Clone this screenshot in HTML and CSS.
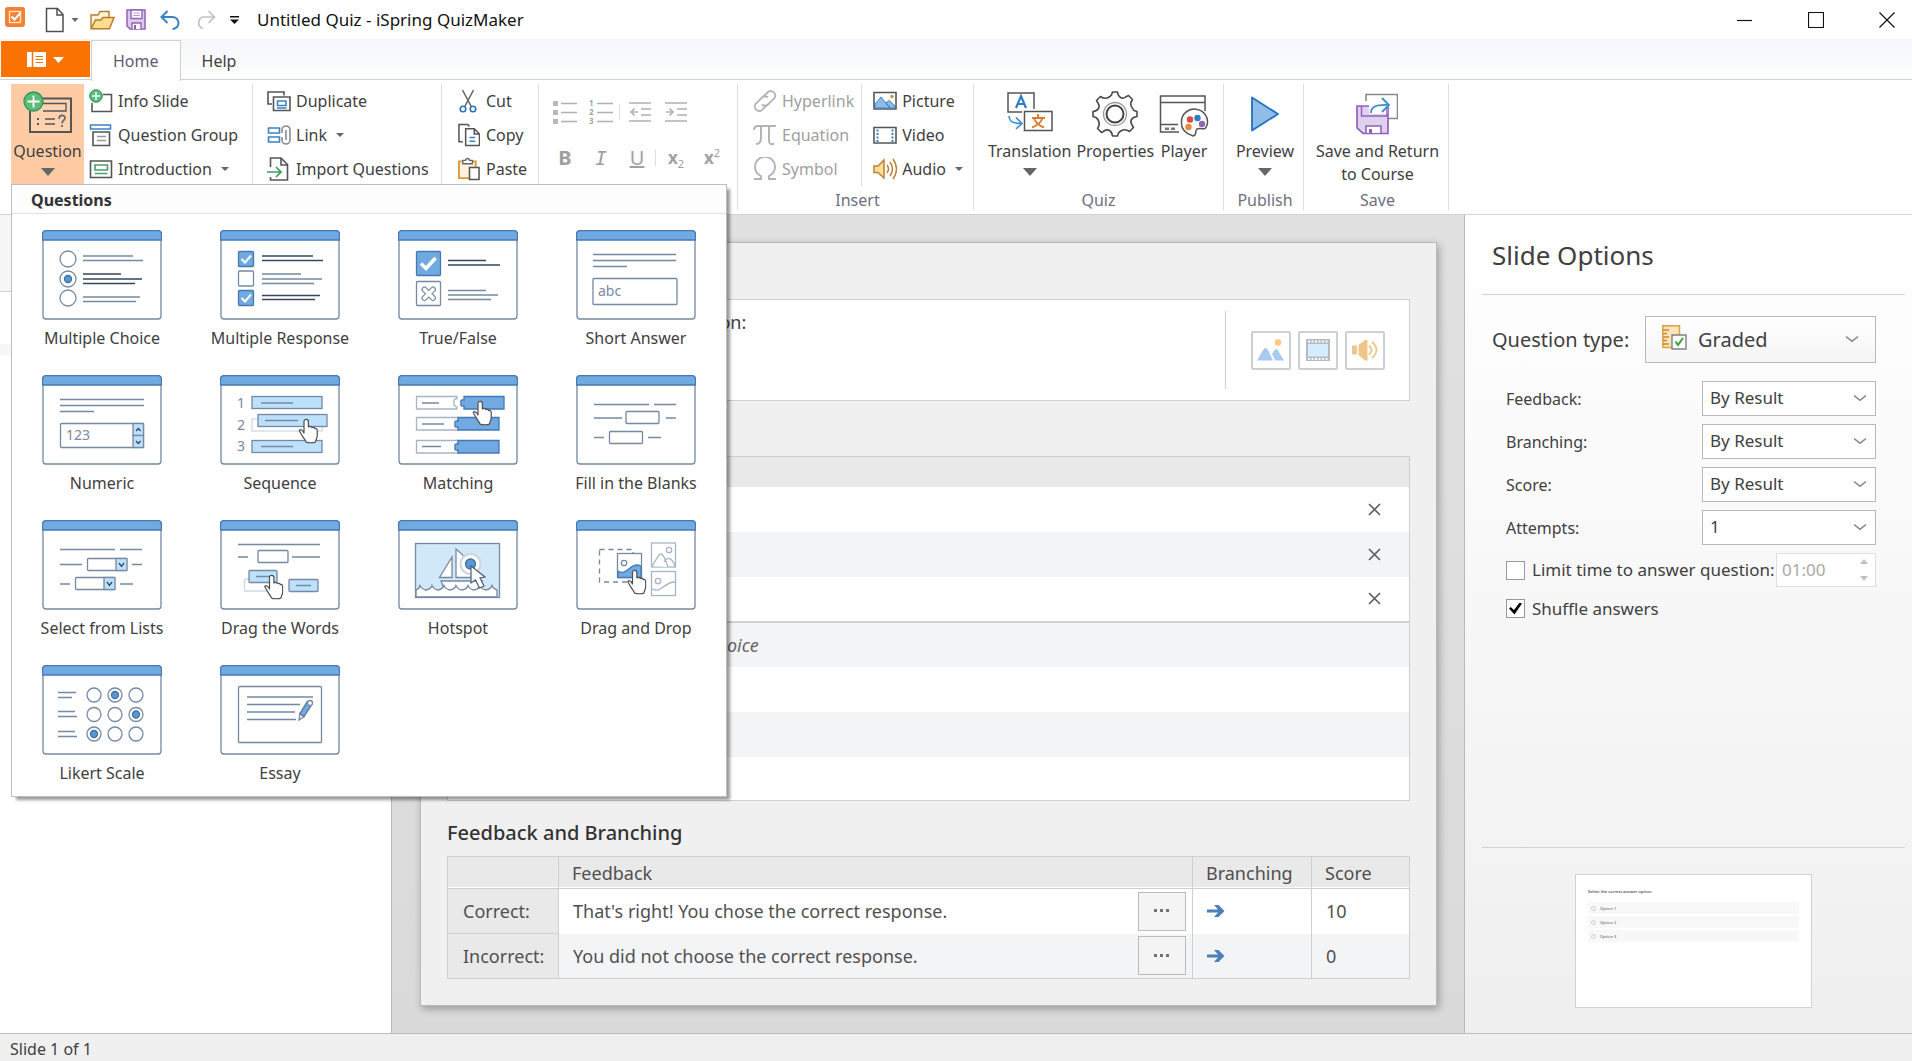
FILE: index.html
```html
<!DOCTYPE html>
<html lang="en">
<head>
<meta charset="utf-8">
<title>Untitled Quiz - iSpring QuizMaker</title>
<link rel="stylesheet" href="styles.css">
</head>
<body>
<svg class="sprite" aria-hidden="true">
  <symbol id="frame" viewBox="0 0 120 90">
    <path d="M1 10V86a3 3 0 0 0 3 3H116a3 3 0 0 0 3-3V10" fill="#fff" stroke="#7689a2"/>
    <path d="M.5 10V4A3.500 3.500 0 0 1 4 .5H116A3.500 3.500 0 0 1 119.500 4V10Z" fill="#71aae0" stroke="#4479b4"/>
  </symbol>
  <symbol id="hand" viewBox="0 0 20 26">
    <path d="M6 15V3.500a2.200 2.200 0 0 1 4.400 0V9c1-1 3-.7 3.400.6 1-.7 2.600-.2 3 1 1-.4 2.400.3 2.400 1.600V18c0 2-1.200 3-1.700 6-1.500 1-8 1-9.500 0-.8-2.500-2.600-4-4-6.500L1.200 12.500c1.200-1.600 3.300-.6 4.800 2.500Z" fill="#fff" stroke="#4d4d4d" stroke-width="1.200" stroke-linejoin="round"/>
  </symbol>
  <symbol id="chev" viewBox="0 0 14 8"><path d="M1 1.500 7 6.300 13 1.500" fill="none" stroke="#858585" stroke-width="1.600"/></symbol>
  <symbol id="cross" viewBox="0 0 13 13"><path d="M1 1 12 12M12 1 1 12" stroke="#5c5c5c" stroke-width="1.600"/></symbol>
  <symbol id="go" viewBox="0 0 18 14"><path d="M0 5.500H11L7 1H11.500L17.500 7 11.500 13H7L11 8.500H0Z" fill="#4f7fb8"/></symbol>
  <symbol id="dots" viewBox="0 0 16 4"><path d="M0 0h3v3H0zM6 0h3v3H6zM12 0h3v3H12z" fill="#737373"/></symbol>
</svg>

<header class="titlebar">
  <svg class="applogo" width="20" height="20" viewBox="0 0 20 20"><rect width="20" height="20" rx="3" fill="#f58132"/><rect x="4.500" y="4.500" width="11" height="11" fill="none" stroke="#ffe9d8" stroke-width="1.300"/><path d="M6.500 9.500 9.500 12.500 15.500 6" fill="none" stroke="#fff" stroke-width="2.200"/></svg>
  <div class="quick">
    <button class="plain" aria-label="New"><svg width="34" height="26" viewBox="0 0 34 26"><path d="M1.500 1.500H12.500L18 7.500V24.500H1.500ZM12 1.500V8H18" fill="#fff" stroke="#505050" stroke-width="1.500"/><path d="M26.500 11h7l-3.500 4z" fill="#666"/></svg></button>
    <button class="plain" aria-label="Open"><svg width="25" height="20" viewBox="0 0 25 20"><path d="M1 18.500V5H8l2-3.500H19V7" fill="#fff3da" stroke="#b57d2b" stroke-width="1.400"/><path d="M1.200 18.800 5.500 10H11l2-2.500H24L19.500 18.800Z" fill="#ffdd90" stroke="#b57d2b" stroke-width="1.400"/></svg></button>
    <button class="plain" aria-label="Save"><svg width="20" height="21" viewBox="0 0 20 21"><path d="M1 1H19V20H4L1 17Z" fill="#dccbeb" stroke="#9361b5" stroke-width="1.500"/><path d="M5 1H16V9.500H5Z M6 20V14H15V20" fill="#fff" stroke="#9361b5" stroke-width="1.400"/><path d="M7 4h7M7 6.500h7" stroke="#b79ccc"/><path d="M8 16h2v4H8z" fill="#9361b5"/></svg></button>
    <button class="plain" aria-label="Undo"><svg width="21" height="20" viewBox="0 0 21 20"><path d="M7.500 1 1.500 7 7.500 13M1.500 7H12.500a6 6 0 0 1 0 12" fill="none" stroke="#3a83c4" stroke-width="2"/></svg></button>
    <button class="plain" aria-label="Redo" disabled><svg width="21" height="20" viewBox="0 0 21 20"><path d="M13.500 1 19.500 7 13.500 13M19.500 7H8a6 6 0 0 0 0 11.500" fill="none" stroke="#c2c2c2" stroke-width="1.700"/></svg></button>
    <button class="plain" aria-label="Customize toolbar"><svg width="9" height="8" viewBox="0 0 9 8"><path d="M0 0h9v1.500H0zM0 3.500h9L4.500 8z" fill="#111"/></svg></button>
  </div>
  <h1 class="title">Untitled Quiz - iSpring QuizMaker</h1>
  <div class="winbtns">
    <button class="plain" aria-label="Minimize"><svg width="16" height="16" viewBox="0 0 16 16"><path d="M0 8.500H15" stroke="#111" stroke-width="1.200"/></svg></button>
    <button class="plain" aria-label="Maximize"><svg width="16" height="16" viewBox="0 0 16 16"><path d="M.5.5H15.500V15.500H.5Z" fill="none" stroke="#111" stroke-width="1.200"/></svg></button>
    <button class="plain" aria-label="Close"><svg width="16" height="16" viewBox="0 0 16 16"><path d="M.5.5 15.500 15.500M15.500.5.5 15.500" stroke="#111" stroke-width="1.200"/></svg></button>
  </div>
</header>

<nav class="tabs">
  <button class="filebtn" aria-label="File"><svg width="37" height="15" viewBox="0 0 37 15"><path d="M0 0H19V15H0Z" fill="#fff"/><path d="M5.500 0V15" stroke="#fa7200" stroke-width="1.500"/><path d="M8.500 4.500H16M8.500 7.500H16M8.500 10.500H16" stroke="#fa7200"/><path d="M26 5h11l-5.500 6z" fill="#fff"/></svg></button>
  <a class="tab active" href="#home">Home</a>
  <a class="tab" href="#help">Help</a>
</nav>

<section class="ribbon" id="home">
  <div class="group g-slides">
    <button class="big hot">
      <svg width="50" height="46" viewBox="0 0 50 46"><path d="M20 7.500H48V41H7V20" fill="#fff" fill-opacity=".15" stroke="#555" stroke-width="2"/><path d="M20 12.500H43V20H20M22 28H32M22 33H32" fill="none" stroke="#555" stroke-width="1.300"/><path d="M14 27h2v2h-2zM14 32h2v2h-2z" fill="#555"/><path d="M36 28c0-5 6-4.500 6-1 0 2.500-3 2.500-3 5.500M39 34v2" fill="none" stroke="#666" stroke-width="1.700"/><circle cx="10.500" cy="10.500" r="9.500" fill="#5cbb77" stroke="#34935a" stroke-width="1.300"/><path d="M10.500 4.500V16.500M4.500 10.500H16.500" stroke="#fff" stroke-width="1.800"/></svg>
      <span>Question</span><i class="down"></i>
    </button>
    <div class="stack">
      <button class="item"><svg width="24" height="24" viewBox="0 0 24 24"><path d="M14 5.500H22.500V22.500H3V14" fill="none" stroke="#555" stroke-width="1.600"/><circle cx="7" cy="7" r="6.300" fill="#5cbb77" stroke="#34935a"/><path d="M7 3V11M3 7H11" stroke="#fff" stroke-width="1.500"/></svg>Info Slide</button>
      <button class="item"><svg width="24" height="24" viewBox="0 0 24 24"><path d="M1.500 2H21.500V6H1.500Z" fill="#fff" stroke="#3a83c4" stroke-width="1.600"/><path d="M4 9H20.500V22.500H4Z" fill="#fff" stroke="#555" stroke-width="1.600"/><path d="M8 13.500H17M8 17.500H17" stroke="#999" stroke-width="1.500"/></svg>Question Group</button>
      <button class="item"><svg width="24" height="24" viewBox="0 0 24 24"><path d="M1.500 4H22.500V20.500H1.500Z" fill="#fff" stroke="#555" stroke-width="1.600"/><path d="M6 8H18.500V13H6Z M6 16.500H18.500" fill="#fff" stroke="#4a9e65" stroke-width="1.600"/></svg>Introduction<i class="caret"></i></button>
    </div>
  </div>
  <div class="group g-edit">
    <div class="stack">
      <button class="item"><svg width="24" height="24" viewBox="0 0 24 24"><path d="M5 15H1V3H17V6.500" fill="#fff" stroke="#555" stroke-width="1.600"/><path d="M6.500 8H23V21.500H6.500Z" fill="#fff" stroke="#555" stroke-width="1.600"/><path d="M10.500 12H19V16.500H10.500ZM10 19H19.500" fill="#fff" stroke="#3a83c4" stroke-width="1.600"/></svg>Duplicate</button>
      <button class="item"><svg width="24" height="24" viewBox="0 0 24 24"><path d="M1.500 5H12.500V10H1.500ZM1.500 14H12.500V19H1.500Z" fill="#fff" stroke="#3a83c4" stroke-width="1.600"/><path d="M15 10V7a4 4 0 0 1 8 0V17a4 4 0 0 1-8 0V14M19 7V17" fill="none" stroke="#8b8b8b" stroke-width="1.600"/></svg>Link<i class="caret"></i></button>
      <button class="item"><svg width="24" height="24" viewBox="0 0 24 24"><path d="M3.500 10V1H14L20.500 7.500V23H3.500V20M14 1V8H20.500" fill="none" stroke="#555" stroke-width="1.600"/><path d="M0 15H14M9 10 14 15 9 20" fill="none" stroke="#3f9d5e" stroke-width="1.700"/></svg>Import Questions</button>
    </div>
  </div>
  <div class="group g-clip">
    <div class="stack">
      <button class="item"><svg width="22" height="24" viewBox="0 0 22 24"><path d="M4.500 1 13.500 18M15.500 1 6.500 18" stroke="#666" stroke-width="1.600"/><g fill="#fff" stroke="#2d72b8" stroke-width="1.600"><circle cx="5" cy="20" r="2.800"/><circle cx="15" cy="20" r="2.800"/></g></svg>Cut</button>
      <button class="item"><svg width="22" height="24" viewBox="0 0 23 24"><path d="M5 19H1V1H10L12 3" fill="#fff" stroke="#555" stroke-width="1.600"/><path d="M8 5.500H17L22.500 11V23H8ZM17 5.500V11H22.500" fill="#fff" stroke="#555" stroke-width="1.600"/><path d="M12 14.500H18M12 18.500H18" stroke="#3a83c4" stroke-width="1.600"/></svg>Copy</button>
      <button class="item"><svg width="22" height="24" viewBox="0 0 23 24"><path d="M1 4H18.500V21.500H1Z" fill="#fff3dc" stroke="#dd9a3c" stroke-width="2"/><path d="M5 6.500V3H8a2 2 0 0 1 4 0H15V6.500Z" fill="#fff" stroke="#666" stroke-width="1.400"/><path d="M12 10.500H22V23H12Z" fill="#fff" stroke="#555" stroke-width="1.600"/></svg>Paste</button>
    </div>
  </div>
  <div class="group g-text">
    <div class="fmt">
      <button class="plain f" aria-label="Bullets" disabled><svg width="24" height="24" viewBox="0 0 24 24"><path d="M0 1h5v5H0zM0 10h5v5H0zM0 19h5v5H0z" fill="#b9b9b9"/><path d="M8 3.500H24M8 12.500H24M8 21.500H24" stroke="#b0b0b0" stroke-width="1.700"/></svg></button>
      <button class="plain f" aria-label="Numbering" disabled><svg class="numicon" width="24" height="24" viewBox="0 0 24 24"><path d="M8 3.500H24M8 12.500H24M8 21.500H24" stroke="#b0b0b0" stroke-width="1.700"/><g class="nums"><text x="0" y="6">1</text><text x="0" y="15">2</text><text x="0" y="24">3</text></g></svg></button>
      <span class="vbar"></span>
      <button class="plain f" aria-label="Decrease indent" disabled><svg width="22" height="22" viewBox="0 0 22 22"><path d="M0 2H22M12 8H22M12 14H22M0 20H22M2 11H9M5.500 7.500 2 11 5.500 14.500" fill="none" stroke="#b0b0b0" stroke-width="1.700"/></svg></button>
      <button class="plain f" aria-label="Increase indent" disabled><svg width="22" height="22" viewBox="0 0 22 22"><path d="M0 2H22M12 8H22M12 14H22M0 20H22M1 11H8M4.500 7.500 8 11 4.500 14.500" fill="none" stroke="#b0b0b0" stroke-width="1.700"/></svg></button>
    </div>
    <div class="fmt">
      <button class="plain f" disabled><b>B</b></button>
      <button class="plain f ital" disabled>I</button>
      <button class="plain f" disabled><u>U</u></button>
      <span class="vbar"></span>
      <button class="plain f xs" disabled><span>x<sub>2</sub></span></button>
      <button class="plain f xs" disabled><span>x<sup>2</sup></span></button>
    </div>
  </div>
  <div class="group g-insert">
    <div class="cols">
      <div class="stack dim">
        <button class="item" disabled><svg width="24" height="24" viewBox="0 0 24 24"><g fill="none" stroke="#b4b4b4" stroke-width="1.800"><path d="M10 8 15 3a4.500 4.500 0 0 1 6.500 6L15 15.500a4.200 4.200 0 0 1-6 0"/><path d="M14 16 9 21A4.500 4.500 0 0 1 2.500 15L9 8.500a4.200 4.200 0 0 1 6 0"/></g></svg>Hyperlink</button>
        <button class="item" disabled><svg width="24" height="24" viewBox="0 0 24 24"><path d="M1 7C1 4 3 3 5 3H23M8 3V15c0 4-1 6-5 6M16 3V18c0 3 2 4 5 2.500" fill="none" stroke="#b4b4b4" stroke-width="2"/></svg>Equation</button>
        <button class="item" disabled><svg width="24" height="24" viewBox="0 0 24 24"><path d="M1 22H8V19A10 10 0 1 1 16 19V22H23" fill="none" stroke="#b4b4b4" stroke-width="1.900"/></svg>Symbol</button>
      </div>
      <div class="stack split">
        <button class="item"><svg width="24" height="24" viewBox="0 0 24 24"><path d="M1 3.500H23V20H1Z" fill="#fff" stroke="#555" stroke-width="1.600"/><path d="M2 15 8 8 17 19H2ZM13 14 16 11.500 22 17V19H17Z" fill="#8dbce8" stroke="#3a83c4"/><circle cx="19" cy="7.500" r="1.700" fill="#e8833a"/></svg>Picture</button>
        <button class="item"><svg width="24" height="24" viewBox="0 0 24 24"><path d="M1 4.500H23V20H1Z" fill="#fff" stroke="#555" stroke-width="1.600"/><path d="M4.500 6.500V19M19.500 6.500V19" stroke="#3a83c4" stroke-width="2" stroke-dasharray="2 1.500"/></svg>Video</button>
        <button class="item"><svg width="24" height="24" viewBox="0 0 24 24"><path d="M1 9H5L11 3V21L5 15.500H1Z" fill="#ffdf9c" stroke="#bd8136" stroke-width="1.500"/><path d="M14 8q3 4 0 8M17 5q5 7 0 14M20 2q7 10 0 20" fill="none" stroke="#bd8136" stroke-width="1.500"/></svg>Audio<i class="caret"></i></button>
      </div>
    </div>
    <p class="gname">Insert</p>
  </div>
  <div class="group g-quiz">
    <div class="bigs">
      <button class="big"><svg width="46" height="46" viewBox="0 0 46 46"><path d="M15 21H1V2H27V18" fill="#fff" stroke="#555" stroke-width="1.500"/><path d="M17.500 20.500H45V39.500H17.500Z" fill="#fff" stroke="#555" stroke-width="1.500"/><path d="M9 17 14 5 19 17M10.500 13H17.500" fill="none" stroke="#2e7cc4" stroke-width="2.200"/><path d="M31 23V27M25 27H38M27 27C29 33 33 35 37 36.500M35.500 27C33.500 33 29 35 25 36.500" fill="none" stroke="#dd7a2e" stroke-width="1.900"/><path d="M2 25C2 30 5 32.500 14 32.500M9 26.500 15 32.500 9 38" fill="none" stroke="#3a8bd0" stroke-width="1.600"/></svg><span>Translation</span><i class="down"></i></button>
      <button class="big"><svg width="46" height="46" viewBox="0 0 46 46"><path d="M20.500 1H25.500Q26 5 28.500 6.500T33.500 6L36.500 4.500 40.500 8.500Q38 12 39 14.500T42 19.500L45 20.500V25.500Q41 26 39.500 28.500T40 34L41.500 36.500 37.500 40.500Q34 38 31 39T26.500 42L25.500 45H20.500Q20 41 17.500 39.500T12 40L9.500 41.500 5.500 37.500Q8 34 7 31T4 26.500L1 25.500V20.500Q5 20 6.500 17.500T6 12L4.500 9.500 8.500 5.500Q12 8 15 7T19.500 4Z" fill="#fff" stroke="#4b4b4b" stroke-width="1.600" stroke-linejoin="round"/><circle cx="23" cy="23" r="11.500" fill="none" stroke="#999" stroke-width="1.300"/><circle cx="23" cy="23" r="8.500" fill="none" stroke="#444" stroke-width="2"/></svg><span>Properties</span></button>
      <button class="big"><svg width="50" height="46" viewBox="0 0 50 46"><path d="M20 41H1.500V5H46V20M1.500 11.500H46M1.500 33.500H19" fill="none" stroke="#555" stroke-width="1.500"/><path d="M6 36.500h4v2.500H6zM12 36.500h4v2.500h-4z" fill="#777"/><path d="M34 45C25 42 22 37 22.500 31A13 12.500 0 1 1 48 34C46 41 43 36 38 38 35 40 39 44 34 45Z" fill="#fff" stroke="#555" stroke-width="1.500"/><circle cx="31" cy="28.500" r="3.200" fill="#d94a3e"/><circle cx="38.500" cy="27" r="3.200" fill="#2e7cc4"/><circle cx="29.500" cy="36" r="3.200" fill="#f0883a"/><circle cx="43" cy="33" r="3.200" fill="#9465ba"/></svg><span>Player</span></button>
    </div>
    <p class="gname">Quiz</p>
  </div>
  <div class="group g-pub">
    <div class="bigs"><button class="big"><svg width="30" height="46" viewBox="0 0 30 46"><path d="M2 6.500 28 23 2 39.500Z" fill="#90bce8" stroke="#1f73bf" stroke-width="1.800" stroke-linejoin="round"/></svg><span>Preview</span><i class="down"></i></button></div>
    <p class="gname">Publish</p>
  </div>
  <div class="group g-save">
    <div class="bigs"><button class="big"><svg width="42" height="46" viewBox="0 0 42 46"><path d="M10 10V3.500H41.500V27.500H32" fill="#fff" stroke="#8a8a8a" stroke-width="1.600"/><path d="M1 15H32V42.500H7L1 37Z" fill="#dfd0ee" stroke="#9361b8" stroke-width="1.700"/><path d="M13 13H32V23H13Z" fill="#fff"/><path d="M5.500 15V25H31V15" fill="none" stroke="#9361b8" stroke-width="1.500"/><path d="M10 42V35H25V42" fill="#fff" stroke="#9361b8" stroke-width="1.600"/><path d="M13 38h3v4h-3z" fill="#9361b8"/><path d="M15 22C15 16 19 13.500 33 14M26 7 33 14 26 21" fill="none" stroke="#3a8bd0" stroke-width="1.800"/></svg><span>Save and Return<br>to Course</span></button></div>
    <p class="gname">Save</p>
  </div>
</section>

<main class="work">
  <aside class="slides"><div class="slidebar"></div><div class="slideband"></div></aside>

  <section class="canvas">
    <div class="card">
      <div class="qbox">
        <p class="qtext">Select the correct answer option:</p>
        <div class="media">
          <button class="mbtn" aria-label="Add picture"><svg width="28" height="22" viewBox="0 0 28 22"><path d="M0 21.500 6 11Q8.500 7 11 11L16 21.500ZM15 15Q19 7 21 11.500L27 21.500H18.500Z" fill="#a9caef"/><circle cx="21" cy="3.500" r="3.300" fill="#ffc87c"/></svg></button>
          <button class="mbtn" aria-label="Add video"><svg width="24" height="22" viewBox="0 0 24 22"><path d="M0 0H24V22H0Z" fill="#b5bbc0"/><path d="M2 5H22V17.500H2Z" fill="#d5ecfe"/><path d="M2 2.500H23M2 20H23" stroke="#fff" stroke-width="2" stroke-dasharray="2 1.500"/></svg></button>
          <button class="mbtn" aria-label="Add audio"><svg width="26" height="22" viewBox="0 0 26 22"><path d="M0 6.500H5V15.500H0ZM6.500 6 13 1H15.500V21.500H13L6.500 16Z" fill="#efc68a"/><path d="M17 6.500q5 4.500 0 9M20 3q9 8 0 16" fill="none" stroke="#efc68a" stroke-width="1.800"/></svg></button>
        </div>
      </div>
      <table class="options">
        <thead><tr><th></th><th></th></tr></thead>
        <tbody>
          <tr><td></td><td class="del"><button class="plain" aria-label="Delete first choice"><svg width="13" height="13"><use href="#cross"/></svg></button></td></tr>
          <tr><td></td><td class="del"><button class="plain" aria-label="Delete second choice"><svg width="13" height="13"><use href="#cross"/></svg></button></td></tr>
          <tr class="last"><td></td><td class="del"><button class="plain" aria-label="Delete third choice"><svg width="13" height="13"><use href="#cross"/></svg></button></td></tr>
          <tr><td class="hint">Type to add a new choice</td><td></td></tr>
          <tr><td></td><td></td></tr>
          <tr><td></td><td></td></tr>
          <tr class="end"><td></td><td></td></tr>
        </tbody>
      </table>
      <h2 class="fbhead">Feedback and Branching</h2>
      <table class="fb">
        <thead><tr><th class="c1"></th><th>Feedback</th><th class="c3">Branching</th><th class="c4">Score</th></tr></thead>
        <tbody>
          <tr><th>Correct:</th><td><div class="fbcell"><span>That's right! You chose the correct response.</span><button class="more" aria-label="Edit correct feedback"><svg width="16" height="4"><use href="#dots"/></svg></button></div></td><td><svg class="go" width="18" height="14"><use href="#go"/></svg></td><td>10</td></tr>
          <tr><th>Incorrect:</th><td><div class="fbcell"><span>You did not choose the correct response.</span><button class="more" aria-label="Edit incorrect feedback"><svg width="16" height="4"><use href="#dots"/></svg></button></div></td><td><svg class="go" width="18" height="14"><use href="#go"/></svg></td><td>0</td></tr>
        </tbody>
      </table>
    </div>
  </section>

  <aside class="panel">
    <h2 class="ptitle">Slide Options</h2>
    <div class="prow ptype">
      <label for="qtype">Question type:</label>
      <span class="sel large">
        <svg class="ruler" width="25" height="25" viewBox="0 0 25 25"><path d="M.8.800H17.500V22.500H.8Z" fill="#fde3b9" stroke="#d9a245" stroke-width="1.500"/><path d="M1 5H7M1 8.500H5M1 12H7M1 15.500H5M1 19H7" stroke="#c98a2c" stroke-width="1.300"/><path d="M10 10H24V24H10Z" fill="#fff" stroke="#808080" stroke-width="1.400"/><path d="M13.500 16.500 16 20 21 13" fill="none" stroke="#3c9f35" stroke-width="2"/></svg>
        <select id="qtype"><option>Graded</option></select>
        <svg class="arrow" width="14" height="8"><use href="#chev"/></svg>
      </span>
    </div>
    <div class="settings">
      <div class="prow"><label for="fbk">Feedback:</label><span class="sel"><select id="fbk"><option>By Result</option></select><svg class="arrow" width="14" height="8"><use href="#chev"/></svg></span></div>
      <div class="prow"><label for="brn">Branching:</label><span class="sel"><select id="brn"><option>By Result</option></select><svg class="arrow" width="14" height="8"><use href="#chev"/></svg></span></div>
      <div class="prow"><label for="scr">Score:</label><span class="sel"><select id="scr"><option>By Result</option></select><svg class="arrow" width="14" height="8"><use href="#chev"/></svg></span></div>
      <div class="prow"><label for="att">Attempts:</label><span class="sel"><select id="att"><option>1</option></select><svg class="arrow" width="14" height="8"><use href="#chev"/></svg></span></div>
      <div class="prow"><label class="tick"><input type="checkbox">Limit time to answer question:</label><span class="spin"><input type="text" value="01:00" aria-label="Time limit" disabled><svg width="8" height="22" viewBox="0 0 8 22"><path d="M0 5 4 0 8 5ZM0 17H8L4 22Z" fill="#c0c0c0"/></svg></span></div>
      <label class="tick"><input type="checkbox" checked>Shuffle answers</label>
    </div>
    <div class="preview">
      <div class="thumb">
        <p class="tq">Select the correct answer option:</p>
        <ul><li><i></i>Option 1</li><li><i></i>Option 2</li><li><i></i>Option 3</li></ul>
      </div>
    </div>
  </aside>
</main>

<footer class="status">Slide 1 of 1</footer>

<div class="gallery">
  <h2>Questions</h2>
  <div class="tiles">
    <button class="tile"><svg viewBox="0 0 120 90"><use href="#frame"/><g class="ln"><circle cx="26" cy="29" r="8"/><circle cx="26" cy="49" r="8"/><circle cx="26" cy="68" r="8"/><path d="M41 26H91M41 30.500H101M41 67H98M41 71.500H94"/></g><path class="dk" d="M41 44H79M41 49H100M41 53.500H93"/><circle class="dot" cx="26" cy="49" r="3.500"/></svg>Multiple Choice</button>
    <button class="tile"><svg viewBox="0 0 120 90"><use href="#frame"/><g class="solid"><rect x="18.500" y="21.500" width="15" height="15" rx="1"/><rect x="18.500" y="60.500" width="15" height="15" rx="1"/></g><g class="ln"><rect x="18.500" y="41" width="15" height="15" rx="1"/><path d="M42 44H81M42 49H102M42 53.500H94"/></g><path class="dk" d="M42 26H93M42 30.500H103M42 65.500H100M42 69.500H95"/><path d="M21.500 29 25 32.500 31 25.500M21.500 68 25 71.500 31 64.500" fill="none" stroke="#fff" stroke-width="2"/></svg>Multiple Response</button>
    <button class="tile"><svg viewBox="0 0 120 90"><use href="#frame"/><g class="solid"><rect x="18.500" y="21.500" width="24" height="24" rx="1"/></g><path d="M23 33.500 28 38.500 37.500 28" fill="none" stroke="#fff" stroke-width="3.500"/><g class="ln"><rect x="18.500" y="51.500" width="24" height="24" rx="1"/><path d="M50 60.500H88M50 65H100M50 69.500H93"/></g><path d="M26.500 59.500 35 68M35 59.500 26.500 68" stroke="#7689a2" stroke-width="6" stroke-linecap="round"/><path d="M26.500 59.500 35 68M35 59.500 26.500 68" stroke="#fff" stroke-width="3.600" stroke-linecap="round"/><path class="dk" d="M50 30.500H88M50 35H102"/></svg>True/False</button>
    <button class="tile"><svg viewBox="0 0 120 90"><use href="#frame"/><g class="ln"><path d="M17 24.500H100M17 30.500H100M17 36.500H51"/><rect x="17" y="48.500" width="84" height="26" rx="1"/></g><text x="22" y="66">abc</text></svg>Short Answer</button>

    <button class="tile"><svg viewBox="0 0 120 90"><use href="#frame"/><g class="ln"><path d="M18 24.500H102M18 30.500H102M18 36.500H52"/><rect x="18.500" y="48.500" width="83" height="24" rx="1"/></g><g class="sky"><rect x="91" y="48.500" width="10.500" height="12"/><rect x="91" y="60.500" width="10.500" height="12"/></g><path class="dk" d="M94 56 96.300 53.500 98.600 56M94 66 96.300 68.500 98.600 66"/><text x="24" y="65">123</text></svg>Numeric</button>
    <button class="tile"><svg viewBox="0 0 120 90"><use href="#frame"/><text x="17" y="33">1</text><text x="17" y="55">2</text><text x="17" y="76">3</text><rect x="32" y="44" width="70" height="12" fill="#fff" stroke="#ccdbe3"/><g class="sky"><rect x="32" y="21.500" width="70" height="12"/><rect x="38" y="39.500" width="69" height="12"/><rect x="32" y="65.500" width="70" height="12"/></g><path class="ln" d="M41 28H73M45 45.500H78M41 71.500H73"/><use href="#hand" x="78" y="43" width="20" height="26"/></svg>Sequence</button>
    <button class="tile"><svg viewBox="0 0 120 90"><use href="#frame"/><g class="ghost"><path d="M59 21.500H18.500V34H59V32Q55 31 56 28 55 24 59 23.500ZM60 42.500H18.500V55H60ZM60 65.500H18.500V78H60Z"/></g><path class="ln" d="M24 28H41M24 49H46M24 71.500H43"/><g class="solid"><path d="M66 21.500H106V34H66V31Q62 32 63 28 62 24 66 25ZM60 42.500H101V55H60V52Q56 53 57 49 56 45 60 46ZM60 65.500H101V78H60V75Q56 76 57 72 56 68 60 69Z"/></g><use href="#hand" x="74" y="25" width="20" height="26"/></svg>Matching</button>
    <button class="tile"><svg viewBox="0 0 120 90"><use href="#frame"/><g class="ln"><path d="M18 29.500H73M78 29.500H100M18 43H46M90 43H100M18 62.500H28M72 62.500H85"/><rect x="50" y="36.500" width="33" height="12" rx="1"/><rect x="33.500" y="56.500" width="33" height="12" rx="1"/></g></svg>Fill in the Blanks</button>

    <button class="tile"><svg viewBox="0 0 120 90"><use href="#frame"/><g class="ln"><path d="M18 29.500H73M78 29.500H100M18 44.500H40M90 44.500H100M18 64H28M78 64H91"/><rect x="45.500" y="38.500" width="39" height="12" rx="1"/><rect x="33.500" y="57.500" width="39" height="12" rx="1"/></g><g class="sky"><rect x="74" y="38.500" width="11" height="12"/><rect x="62" y="57.500" width="11" height="12"/></g><path class="dk" d="M77 43 79.500 46.500 82 43M65 62 67.500 65.500 70 62"/></svg>Select from Lists</button>
    <button class="tile"><svg viewBox="0 0 120 90"><use href="#frame"/><g class="ln"><path d="M18 24.500H100M18 37H28M72 37H100"/><rect x="38" y="30.500" width="30" height="12" rx="1"/></g><rect x="24.500" y="59" width="26" height="12" rx="1" fill="#fff" stroke="#ccdbe3"/><g class="sky"><rect x="29" y="50.500" width="28" height="12" rx="1"/><rect x="69" y="59.500" width="29" height="12" rx="1"/></g><path class="ln" d="M36 56.500H50M76 65.500H91"/><use href="#hand" x="43.500" y="54" width="20" height="26"/></svg>Drag the Words</button>
    <button class="tile"><svg viewBox="0 0 120 90"><use href="#frame"/><rect x="17.500" y="23.500" width="84" height="54" fill="#d0e8f7"/><path d="M54 37V57.500H41.500ZM58 29V57.500H78C74 46 66 35 58 29ZM43 61H84L79 71H47Z" fill="#fff" stroke="#7689a2"/><path d="M18 70q3-1 4-4.500 2 4 6 4.500 5-1 6-4.500 2 4 6 4.500 5-1 6-4.500 2 4 6 4.500 5-1 6-4.500 2 4 6 4.500 5-1 6-4.500 2 4 6 4.500 5-1 6-4.500 2 4 6 4.500 5-1 6-4.500 2 4 5 4.500V77H18Z" fill="#fff" stroke="#7689a2" stroke-width="1.300"/><rect class="frm" x="17.500" y="23.500" width="84" height="54"/><circle cx="72.500" cy="44" r="10" fill="#fff" stroke="#cfd5da" stroke-width="2"/><circle class="dot" cx="72.500" cy="44" r="5"/><path d="M73 46V63L77.500 60 81.500 68 86 66 82 58 87 57Z" fill="#fff" stroke="#4d5d70" stroke-width="1.200"/></svg>Hotspot</button>
    <button class="tile"><svg viewBox="0 0 120 90"><use href="#frame"/><path class="ln" d="M23.500 29.500H57V62H23.500Z" stroke-dasharray="5 4"/><g class="ln"><rect x="41.500" y="33.500" width="24" height="24"/><circle cx="48" cy="43" r="2.700"/></g><path d="M42 51C51 57 54 41 65 46V57.500H42Z" fill="#71aae0" stroke="#4479b4"/><g class="ghost"><rect x="75.500" y="23" width="24" height="24"/><rect x="75.500" y="51.500" width="24" height="24"/><circle cx="93" cy="30" r="2.700"/><circle cx="82" cy="61" r="2.700"/><path d="M76 46C80 41 82 34 85 34S90 42 92 47M88 42C91 37 95 36 99 46M76 69C86 74 87 62 99 62"/></g><use href="#hand" x="50.500" y="49" width="20" height="26"/></svg>Drag and Drop</button>

    <button class="tile"><svg viewBox="0 0 120 90"><use href="#frame"/><g class="ln"><path d="M16 27.500H34M16 32.500H30M16 46.500H33M16 51.500H35M16 66.500H33M16 71.500H35"/><circle cx="52" cy="30" r="7"/><circle cx="73" cy="30" r="7"/><circle cx="94" cy="30" r="7"/><circle cx="52" cy="49.500" r="7"/><circle cx="73" cy="49.500" r="7"/><circle cx="94" cy="49.500" r="7"/><circle cx="52" cy="69" r="7"/><circle cx="73" cy="69" r="7"/><circle cx="94" cy="69" r="7"/></g><circle class="dot" cx="73" cy="30" r="3.500"/><circle class="dot" cx="94" cy="49.500" r="3.500"/><circle class="dot" cx="52" cy="69" r="3.500"/></svg>Likert Scale</button>
    <button class="tile"><svg viewBox="0 0 120 90"><use href="#frame"/><g class="ln"><rect x="18.500" y="21.500" width="83" height="56" rx="1"/><path d="M27 32H93M27 39.500H80M27 47H75M27 54.500H76"/><path d="M79 55 80 48.500 84 51.500Z"/></g><path d="M80 48.500 87 37 91.500 40 84 51.500Z" fill="#71aae0" stroke="#5b7594"/><circle class="ln" cx="90" cy="38" r="2.500"/></svg>Essay</button>
  </div>
</div>
</body>
</html>
```

FILE: styles.css
```css
*, *::before, *::after { box-sizing: border-box; }
body {
  margin: 0;
  min-height: 100vh;
  display: flex;
  flex-direction: column;
  position: relative;
  background: #fff;
  color: #404040;
  font: 16px/22px "Noto Sans", "Open Sans", sans-serif;
}
h1, h2, p, ul { margin: 0; padding: 0; font-weight: 400; }
button, select, input { font: inherit; color: inherit; }
button { border: 0; background: none; padding: 0; }
svg { display: block; flex: none; }
.sprite { position: absolute; width: 0; height: 0; }

/* Title bar */
.titlebar { display: flex; align-items: center; height: 39px; padding: 0 17px 0 5px; }
.applogo { align-self: flex-start; margin-top: 7px; }
.quick { display: flex; align-items: center; gap: 11px; margin-left: 20px; }
.quick button:nth-child(n+4) { margin-left: 3px; }
.title { margin-left: 18px; font-size: 17px; color: #111; }
.winbtns { display: flex; gap: 55px; margin-left: auto; }

/* Tabs */
.tabs {
  display: flex;
  height: 41px;
  padding: 0 1px;
  border-bottom: 1px solid #d2d2d2;
  background: linear-gradient(#f5f6f9, #fcfefd);
}
.filebtn { display: flex; align-items: center; justify-content: center; width: 89px; height: 36px; margin-top: 2px; background: #fa7200; }
.tab { display: flex; align-items: center; height: 41px; margin-top: 1px; padding: 0 21px; color: #404040; text-decoration: none; }
.tab.active { margin-left: 1px; border: 1px solid #d2d2d2; border-bottom: 0; background: #fff; color: #5d5d70; }

/* Ribbon */
.ribbon { display: flex; padding: 4px 0 4px 11px; border-bottom: 1px solid #d2d2d2; }
.group { display: flex; min-height: 126px; border-right: 1px solid #dedede; }
.stack { display: flex; flex-direction: column; align-items: flex-start; }
.item { display: flex; align-items: center; gap: 5px; height: 34px; white-space: nowrap; }
.item:disabled, .f:disabled { color: #a0a0a0; }
.caret { width: 0; height: 0; margin-left: 4px; border: solid transparent; border-width: 4px 4px 0; border-top-color: #666; }
.down { width: 0; height: 0; margin-top: 5px; border: solid transparent; border-width: 8px 7px 0; border-top-color: #666; }
.big { display: flex; flex-direction: column; align-items: center; padding-top: 7px; line-height: 23px; text-align: center; white-space: nowrap; }
.big svg { margin-bottom: 3px; }
.hot { width: 73px; height: 100px; background: #ffcba4; }
.g-slides { width: 242px; gap: 5px; }
.g-edit { width: 189px; padding-left: 14px; }
.g-clip { width: 97px; padding-left: 16px; }
.g-clip .item { gap: 6px; }
.g-text { width: 199px; flex-direction: column; gap: 16px; padding: 13px 0 0 8px; }
.fmt { display: flex; align-items: center; height: 30px; }
.f { display: flex; align-items: center; justify-content: center; width: 36px; font-size: 20px; }
.f b { font-weight: 700; }
.ital { font-family: "DejaVu Sans Mono", monospace; font-style: italic; }
.xs { font-size: 17px; font-weight: 700; }
.xs sub, .xs sup { font-size: 11px; font-weight: 400; line-height: 0; }
.vbar { width: 1px; height: 16px; margin-right: 2px; background: #dedede; }
.numicon { overflow: visible; }
.nums { font: 700 8px "Noto Sans", sans-serif; fill: #a5a5a5; }
.g-insert, .g-quiz, .g-pub, .g-save { flex-direction: column; justify-content: space-between; }
.gname { text-align: center; font-size: 16px; line-height: 20px; color: #6f6f7c; }
.cols { display: flex; }
.g-insert { width: 236px; padding-left: 15px; }
.g-insert .gname { padding-right: 11px; }
.split { margin-left: 7px; padding-left: 11px; border-left: 1px solid #dedede; }
.bigs { display: flex; justify-content: center; gap: 5px; }
.g-quiz { width: 250px; }
.g-pub { width: 80px; padding-left: 3px; }
.g-save { width: 145px; padding-left: 3px; }

/* Work area */
.work { flex: 1; display: flex; border-bottom: 1px solid #bdbdbd; }
.slides { flex: none; width: 392px; border-right: 1px solid #b9b9b9; background: #fff; }
.slidebar { height: 77px; border-bottom: 1px solid #d2d2d2; background: #f7f7f7; }
.slideband { height: 11px; margin-top: 52px; background: #f7f7f7; }
.canvas { flex: 1; min-width: 0; padding: 27px 27px 27px 28px; background: linear-gradient(#e1e1e1, #dadada); }
.card { padding: 56px 26px 26px; border: 1px solid #b9b9b9; background: #f0f0f0; box-shadow: 2px 3px 8px rgba(0, 0, 0, .3); }
.qbox { display: flex; justify-content: space-between; padding: 11px 24px 11px 21px; border: 1px solid #cfcfcf; background: #fff; }
.qtext { font-size: 18px; line-height: 22px; }
.media { display: flex; align-items: center; gap: 7px; height: 78px; padding-left: 25px; border-left: 1px solid #cfcfcf; }
.mbtn { display: flex; align-items: center; justify-content: center; width: 40px; height: 39px; border: 2px solid #cbd0d6; border-radius: 2px; background: #fff; }
table { width: 100%; border-collapse: collapse; }
.options { margin-top: 55px; border: 1px solid #cfcfcf; background: #fff; }
.options th { height: 30px; padding: 0; background: #e8e8e8; }
.options td { height: 45px; padding: 0; }
.options .end td { height: 44px; }
.options tr:nth-child(2n) td { background: #f3f4f6; }
.options .last td { border-bottom: 2px solid #ced2d2; }
.options td.hint { padding-left: 111px; font-size: 18px; font-style: italic; color: #666; }
.del { width: 68px; }
.del button { display: block; margin-left: 26px; }
.fbhead { margin: 19px 0 10px; font-size: 20px; line-height: 26px; font-weight: 500; color: #333; }
.fb { border: 1px solid #cfcfcf; background: #fff; font-size: 18px; color: #505050; }
.fb th { padding: 0 0 0 15px; background: #e9e9e9; border: 1px solid #cfcfcf; text-align: left; font-weight: 400; }
.fb thead th { height: 32px; padding-left: 13px; box-shadow: inset 0 -1px #fff; }
.fb td { height: 45px; padding: 0 0 0 14px; border-right: 1px solid #cfcfcf; }
.fb tbody tr:nth-child(2) td { background: #f3f4f6; }
.c1 { width: 111px; }
.c3 { width: 119px; }
.c4 { width: 98px; }
.fbcell { display: flex; align-items: center; justify-content: space-between; padding-right: 6px; }
.more { display: flex; align-items: center; justify-content: center; width: 48px; height: 39px; border: 1px solid #b8bcbc; background: #f4f4f4; }

/* Slide options */
.panel { flex: none; display: flex; flex-direction: column; width: 448px; padding: 0 7px 0 17px; border-left: 1px solid #b9b9b9; background: linear-gradient(#fff, #efefef); }
.ptitle { padding: 24px 10px 23px; border-bottom: 1px solid #d2d2d2; font-size: 26px; line-height: 32px; }
.prow { display: flex; align-items: center; justify-content: space-between; }
.ptype { padding: 21px 29px 18px 10px; font-size: 20px; }
.sel { display: grid; grid-template-columns: 1fr 22px; align-items: center; width: 174px; height: 35px; border: 1px solid #b5b9b9; background: #fff; }
.sel select { grid-area: 1 / 1 / 2 / 3; height: 100%; padding: 0 0 2px 7px; border: 0; background: none; appearance: none; }
.sel .arrow { grid-area: 1 / 2; pointer-events: none; margin-bottom: 2px; }
.sel.large { grid-template-columns: 52px 1fr 30px; width: 231px; height: 47px; background: linear-gradient(#fff, #f5f5f5); }
.sel.large select { grid-area: 1 / 1 / 2 / 4; padding: 0 0 0 52px; }
.sel.large .arrow { grid-area: 1 / 3; }
.ruler { grid-area: 1 / 1; margin-left: 16px; margin-bottom: 4px; pointer-events: none; }
.settings { display: flex; flex-direction: column; gap: 8px; padding: 0 29px 0 24px; }
.settings select { font-size: 17px; }
.tick { display: flex; align-items: center; gap: 7px; height: 27px; font-size: 17px; white-space: nowrap; }
.tick input { display: grid; place-items: center; flex: none; width: 19px; height: 19px; margin: 0; border: 1px solid #989898; background: #fff; appearance: none; }
.tick input:checked::before { content: ""; width: 13px; height: 12px; background: #000; clip-path: polygon(0 50%, 14% 38%, 38% 62%, 82% 0, 100% 8%, 42% 100%); }
.spin { display: flex; align-items: center; width: 100px; height: 34px; padding-right: 7px; border: 1px solid #dedede; background: #fff; }
.spin input { flex: 1; min-width: 0; height: 30px; padding: 0 0 2px 5px; border: 0; background: none; color: #a8a8a8; font-size: 17px; }
.preview { margin-top: auto; padding: 26px 0 25px; border-top: 1px solid #d2d2d2; }
.thumb { width: 237px; height: 134px; margin: 0 auto; padding: 14px 12px; border: 1px solid #d2d2d2; background: #fff; font-size: 4px; line-height: 5px; color: #555; }
.tq { font-weight: 600; }
.thumb ul { display: flex; flex-direction: column; gap: 2px; margin-top: 8px; list-style: none; }
.thumb li { display: flex; align-items: center; gap: 4px; height: 12px; padding-left: 3px; border-radius: 1px; background: #f8f8f8; }
.thumb i { width: 5px; height: 5px; border: 1px solid #ccc; border-radius: 50%; }

.status { height: 27px; padding: 4px 10px 0; background: #f0f0f0; }

/* Question gallery drop-down */
.gallery { position: absolute; top: 184px; left: 11px; width: 716px; height: 613px; border: 1px solid #bdbdbd; background: #fff; box-shadow: 4px 4px 3px -1px rgba(0, 0, 0, .4); }
.gallery h2 { height: 29px; padding: 4px 0 0 19px; border-bottom: 1px solid #e2e2e2; background: #fdfdfd; font-size: 16px; font-weight: 700; color: #333; }
.tiles { display: grid; grid-template-columns: repeat(4, 178px); grid-auto-rows: 145px; padding: 16px 1px 0; }
.tile { display: flex; flex-direction: column; align-items: center; gap: 7px; }
.tile svg { width: 120px; height: 90px; stroke-width: 1.3; }
.ln { fill: #fff; stroke: #7689a2; }
.dk { fill: none; stroke: #34475f; }
.frm { fill: none; stroke: #7689a2; }
.solid { fill: #71aae0; stroke: #4479b4; }
.sky { fill: #bde0fb; stroke: #7689a2; }
.ghost { fill: #fff; stroke: #a5b5c4; }
.dot { fill: #5b97d4; stroke: #3f6fa5; }
.tile text { font: 14px "Noto Sans", sans-serif; fill: #7689a2; }
```
